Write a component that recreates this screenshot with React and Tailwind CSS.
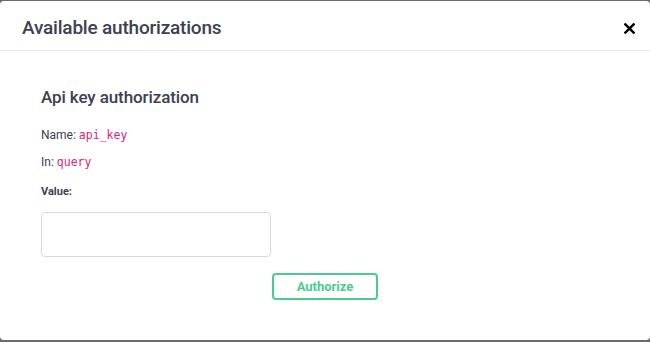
export default function App() {
  return (
    <div className="h-[342px] w-[650px] bg-[#6b6b6b] pt-px" style={{ fontFamily: "Roboto, 'Open Sans', sans-serif" }}>
      <div className="h-[339px] w-[650px] rounded-[4px] bg-white flex flex-col">
        <div className="h-[50px] flex items-center justify-between border-b border-[#ebebeb] pl-[22px] pr-[11px] pt-[5px]">
          <h3 className="text-[19px] font-medium text-[#3b4151] tracking-[-0.2px]">Available authorizations</h3>
          <button className="w-[20px] h-[20px] flex items-center justify-center">
            <svg width="11" height="11" viewBox="0 0 12 12">
              <path d="M1.5 1.5 L10.5 10.5 M10.5 1.5 L1.5 10.5" stroke="#000" strokeWidth="2.6" strokeLinecap="square" />
            </svg>
          </button>
        </div>
        <div className="pl-[41px] pt-[34px] flex flex-col">
          <h4 className="text-[17px] font-medium text-[#3b4151] leading-[24px] tracking-[-0.1px]">Api key authorization</h4>
          <div className="mt-[17px] text-[12px] text-[#3b4151] leading-[18px]">
            Name: <code className="text-[11.5px] text-[#d6287b]" style={{ fontFamily: "'DejaVu Sans Mono', monospace" }}>api_key</code>
          </div>
          <div className="mt-[9px] text-[12px] text-[#3b4151] leading-[18px]">
            In: <code className="text-[11.5px] text-[#d6287b]" style={{ fontFamily: "'DejaVu Sans Mono', monospace" }}>query</code>
          </div>
          <label className="mt-[13px] text-[11px] font-bold text-[#3b4151] leading-[16px]">Value:</label>
          <input className="mt-[12px] w-[230px] h-[45px] border border-[#d9d9d9] rounded-[4px] outline-none px-2" />
          <div className="w-[337px] flex justify-end mt-[16px]">
            <button className="w-[106px] h-[27px] border-2 border-[#49cc90] rounded-[4px] text-[#49cc90] text-[13px] font-bold">Authorize</button>
          </div>
        </div>
      </div>
    </div>
  );
}
